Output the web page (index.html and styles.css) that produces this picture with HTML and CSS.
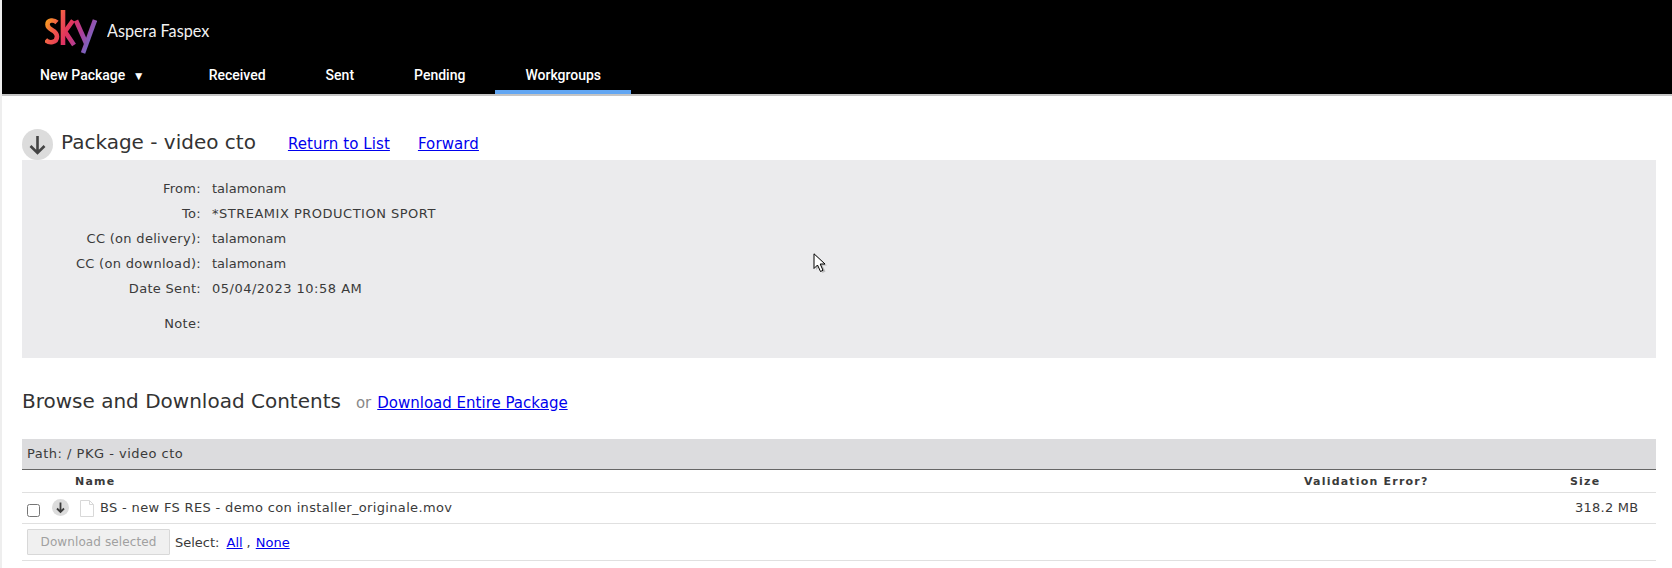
FILE: index.html
```html
<!DOCTYPE html>
<html lang="en">
<head>
<meta charset="utf-8">
<title>Aspera Faspex</title>
<link rel="stylesheet" href="styles.css">
</head>
<body>
<header class="topbar">
  <div class="brand">
    <svg class="logo" viewBox="0 0 52 44" width="52" height="44" aria-label="sky">
      <defs>
        <linearGradient id="skygrad" gradientUnits="userSpaceOnUse" x1="0" y1="10" x2="52" y2="36">
          <stop offset="0" stop-color="#f9a51c"/>
          <stop offset="0.22" stop-color="#f0574a"/>
          <stop offset="0.45" stop-color="#e0325f"/>
          <stop offset="0.68" stop-color="#a8419f"/>
          <stop offset="1" stop-color="#5a7fd8"/>
        </linearGradient>
      </defs>
      <g fill="none" stroke="url(#skygrad)" stroke-width="4.600">
        <path d="M12 12.500C9 9.500 2.500 9.500 2.500 14.500C2.500 20.500 12 19.500 12 26.500C12 33 4 33.500 .5 30"/>
        <path d="M18 0V35"/>
        <path d="M28 10.500L20 21.500L29 35"/>
        <path d="M31 10.500L41 33"/>
        <path d="M50 10L38 43"/>
      </g>
    </svg>
    <span class="brand-name">Aspera Faspex</span>
  </div>
  <nav class="tabs">
    <a class="tab tab-new">New Package <span class="caret">▼</span></a>
    <a class="tab">Received</a>
    <a class="tab">Sent</a>
    <a class="tab">Pending</a>
    <a class="tab tab-active">Workgroups</a>
  </nav>
</header>

<main class="page">
  <div class="title-row">
    <svg class="round-icon" viewBox="0 0 31 31" width="31" height="31" aria-hidden="true">
      <circle cx="15.500" cy="15.500" r="15.500" fill="#dcdcdc"/>
      <path d="M15.500 7V24M8.500 17L15.500 24L22.500 17" fill="none" stroke="#444" stroke-width="2.600"/>
    </svg>
    <h1 class="title">Package - video cto</h1>
    <a class="link big-link" href="#">Return to List</a>
    <a class="link big-link" href="#">Forward</a>
  </div>

  <section class="details">
    <dl class="meta">
      <dt>From:</dt><dd>talamonam</dd>
      <dt>To:</dt><dd class="wide">*STREAMIX PRODUCTION SPORT</dd>
      <dt>CC (on delivery):</dt><dd>talamonam</dd>
      <dt>CC (on download):</dt><dd>talamonam</dd>
      <dt>Date Sent:</dt><dd class="wide">05/04/2023 10:58 AM</dd>
      <dt class="note">Note:</dt><dd class="note"></dd>
    </dl>
  </section>

  <div class="browse-head">
    <h2 class="browse-title">Browse and Download Contents</h2>
    <span class="or">or</span>
    <a class="link big-link" href="#">Download Entire Package</a>
  </div>

  <div class="path-bar">Path: / PKG - video cto</div>
  <div class="file-row file-head">
    <span class="col-name">Name</span>
    <span class="col-valid">Validation Error?</span>
    <span class="col-size">Size</span>
  </div>
  <div class="file-row file-item">
    <span class="col-check"><input type="checkbox" class="check"></span>
    <svg class="small-icon" viewBox="0 0 17 17" width="17" height="17" aria-hidden="true">
      <circle cx="8.500" cy="8.500" r="8.500" fill="#dcdcdc"/>
      <path d="M8.500 3.500V13M5 9.500L8.500 13L12 9.500" fill="none" stroke="#3c3c3c" stroke-width="1.800"/>
    </svg>
    <svg class="file-icon" viewBox="0 0 14 17" width="14" height="17" aria-hidden="true">
      <path d="M.5 .5H9.500L13.500 4.500V16.500H.5Z" fill="#fff" stroke="#d8d8d8"/>
      <path d="M9.500 .5V4.500H13.500" fill="none" stroke="#d8d8d8"/>
    </svg>
    <span class="file-name">BS - new FS RES - demo con installer_originale.mov</span>
    <span class="file-size">318.2 MB</span>
  </div>
  <div class="actions">
    <button class="download-btn" disabled>Download selected</button>
    <span class="select-label">Select:</span>
    <a class="link" href="#">All</a>
    <span class="sep">,</span>
    <a class="link" href="#">None</a>
  </div>
</main>

<svg class="cursor" viewBox="0 0 16 22" width="16" height="22" aria-hidden="true">
  <path d="M3 2V17L6.500 13.500L9.500 20L12.500 18.500L9.500 12.500H14Z" fill="#888" opacity=".45"/>
  <path d="M1 0.8V15.500L4.500 12L7.500 18.500L10 17.300L7.200 11H12Z" fill="#fff" stroke="#000" stroke-width="1"/>
</svg>
</body>
</html>
```
FILE: styles.css
```css
* { box-sizing: border-box; }
html, body { margin: 0; padding: 0; }
body {
  width: 1672px;
  height: 568px;
  overflow: hidden;
  background: #fff;
  font-family: "DejaVu Sans", Verdana, sans-serif;
  font-size: 13px;
  color: #3a3a3a;
  position: relative;
}
body::before {
  content: "";
  position: absolute;
  left: 0;
  top: 0;
  bottom: 0;
  width: 2px;
  background: #eeeeee;
}
.topbar {
  height: 96px;
  margin-left: 2px;
  background: #000;
  border-bottom: 2px solid #c4c4c4;
}
.brand {
  display: flex;
  align-items: flex-start;
  height: 64px;
  padding: 10px 0 0 43px;
}
.logo { display: block; flex: none; }
.brand-name {
  margin: 9px 0 0 10px;
  font-family: Lato, sans-serif;
  font-size: 18px;
  line-height: 22px;
  color: #f2f2f2;
  transform: scaleX(.9);
  transform-origin: left center;
}
.tabs { display: flex; height: 30px; padding-left: 8px; }
.tab {
  display: block;
  padding: 0 30px;
  font-family: Roboto, sans-serif;
  font-weight: 500;
  font-size: 14px;
  line-height: 22px;
  color: #fff;
  border-bottom: 4px solid transparent;
}
.tab-new { padding-right: 34px; }
.caret { font-size: 12px; margin-left: 4px; }
.tab-active { border-bottom-color: #62a6f2; }
.page {
  margin-left: 2px;
  padding: 0 16px 0 20px;
}
.title-row {
  display: flex;
  align-items: center;
  height: 64px;
  padding-top: 32px;
}
.round-icon { flex: none; display: block; margin-right: 8px; }
.title {
  margin: 0 32px 4px 0;
  font-size: 20px;
  font-weight: 400;
  line-height: 26px;
  color: #333;
}
.link { color: #0000ee; text-decoration: underline; }
.big-link { font-size: 15px; letter-spacing: .1px; margin-right: 28px; margin-bottom: 1px; }
.details {
  height: 198px;
  background: #ebebed;
  padding-top: 16px;
}
.meta {
  display: grid;
  grid-template-columns: 179px 1fr;
  column-gap: 11px;
  grid-auto-rows: 25px;
  margin: 0;
  line-height: 25px;
}
.meta dt { text-align: right; letter-spacing: .3px; }
.meta dd { margin: 0; }
.meta dd.wide { letter-spacing: .5px; }
.meta .note { margin-top: 10px; }
.browse-head {
  display: flex;
  align-items: center;
  height: 81px;
  padding-top: 5px;
}
.browse-title {
  margin: 0 15px 0 0;
  font-size: 20px;
  font-weight: 400;
  color: #333;
}
.or { font-size: 15px; color: #888; margin: 3px 6px 0 0; }
.browse-head .big-link { margin-top: 3px; margin-bottom: 0; letter-spacing: 0; }
.path-bar {
  height: 31px;
  background: #dcdcde;
  border-bottom: 1px solid #666;
  padding-left: 5px;
  line-height: 29px;
  letter-spacing: .5px;
}
.file-row {
  display: flex;
  align-items: center;
  border-bottom: 1px solid #e0e0e0;
}
.file-head {
  height: 23px;
  font-size: 11px;
  font-weight: 700;
  letter-spacing: 1.2px;
}
.col-name { margin-left: 53px; width: 1229px; }
.col-valid { width: 266px; }
.file-item { height: 31px; }
.col-check { width: 30px; flex: none; display: flex; padding-left: 5px; }
.check { width: 13px; height: 13px; margin: 4px 0 0; }
.small-icon { flex: none; display: block; margin: 0 11px 2px 0; }
.file-icon { flex: none; display: block; margin: 0 6px 0 0; }
.file-name { flex: 1; letter-spacing: .34px; margin-bottom: 2px; }
.file-size { width: 81px; letter-spacing: .25px; margin-bottom: 2px; }
.actions {
  display: flex;
  align-items: center;
  height: 37px;
  padding-left: 5px;
  border-bottom: 1px solid #e0e0e0;
}
.download-btn {
  width: 143px;
  height: 26px;
  padding: 0;
  margin-right: 5px;
  background: #f0f0f0;
  border: 1px solid #d8d8d8;
  border-radius: 1px;
  color: #a0a0a0;
  font: 12px "DejaVu Sans", Verdana, sans-serif;
  letter-spacing: .1px;
}
.select-label { margin-right: 7px; }
.sep { margin: 0 5px 0 4px; }
.cursor { position: absolute; left: 813px; top: 253px; }
```
